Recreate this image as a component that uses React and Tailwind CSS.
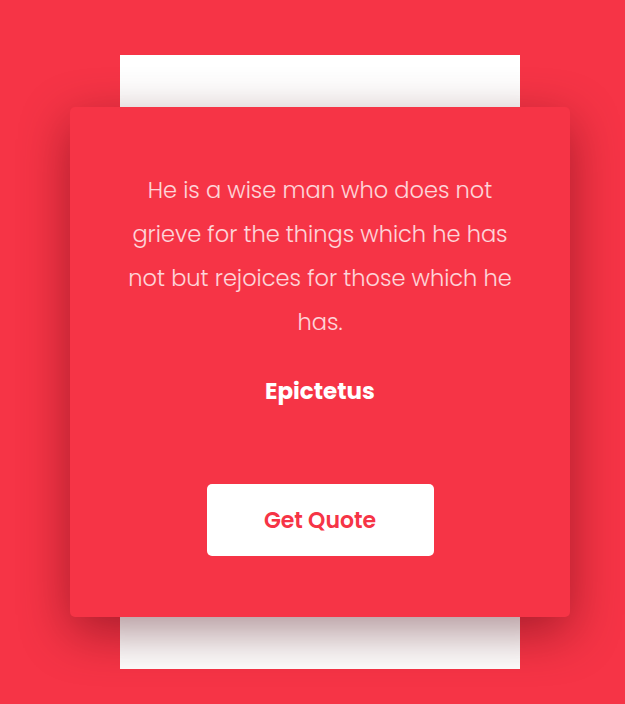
export default function App() {
  return (
    <div className="min-h-[704px] bg-[#f63446] font-['Poppins','Inter',sans-serif] pt-[55px]">
      <div className="ml-[70px] grid w-[500px] items-center">
        {/* back sheet */}
        <div className="col-start-1 row-start-1 mx-auto h-[614px] w-[400px] bg-white" />

        {/* card */}
        <div className="relative col-start-1 row-start-1 flex h-[510px] flex-col items-center rounded-[5px] bg-[#f63446] px-[50px] pt-[61px] text-center shadow-[0_15px_50px_rgba(70,0,12,0.45)]">
          <p className="text-[22.5px] leading-[44px] font-light text-white/80">
            He is a wise man who does not grieve for the things which he has not but rejoices for those which he has.
          </p>
          <h3 className="mt-[31px] text-[23px] leading-[33px] font-bold text-white">Epictetus</h3>
          <button className="mt-[76px] h-[72px] w-[227px] rounded-[5px] bg-white text-[22px] font-semibold text-[#f63446]">
            Get Quote
          </button>
        </div>
      </div>
    </div>
  );
}
